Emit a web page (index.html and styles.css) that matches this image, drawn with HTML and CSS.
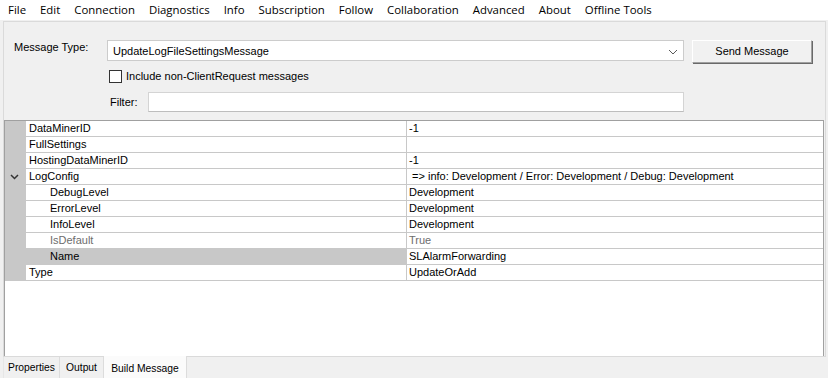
FILE: index.html
```html
<!DOCTYPE html>
<html>
<head>
<meta charset="utf-8">
<link rel="stylesheet" href="styles.css">
</head>
<body>
<div class="menubar">
  <span class="mi">File</span>
  <span class="mi">Edit</span>
  <span class="mi">Connection</span>
  <span class="mi">Diagnostics</span>
  <span class="mi">Info</span>
  <span class="mi">Subscription</span>
  <span class="mi">Follow</span>
  <span class="mi">Collaboration</span>
  <span class="mi">Advanced</span>
  <span class="mi">About</span>
  <span class="mi">Offline Tools</span>
</div>
<div class="main">
  <div class="form">
    <div class="row row-type">
      <span class="lbl-type">Message Type:</span>
      <div class="combo">
        <span class="combo-text">UpdateLogFileSettingsMessage</span>
        <svg class="combo-chev" width="10" height="6" viewBox="0 0 10 6"><path d="M1 1 L5 5 L9 1" fill="none" stroke="#5a5a5a" stroke-width="1"/></svg>
      </div>
      <div class="btn">Send Message</div>
    </div>
    <div class="row row-check">
      <span class="checkbox"></span>
      <span class="check-lbl">Include non-ClientRequest messages</span>
    </div>
    <div class="row row-filter">
      <span class="lbl-filter">Filter:</span>
      <div class="input"></div>
    </div>
  </div>
  <div class="grid">
    <div class="prow"><div class="g"></div><div class="n">DataMinerID</div><div class="v">-1</div></div>
    <div class="prow"><div class="g"></div><div class="n">FullSettings</div><div class="v"></div></div>
    <div class="prow"><div class="g"></div><div class="n">HostingDataMinerID</div><div class="v">-1</div></div>
    <div class="prow"><div class="g"><svg class="exp" width="9" height="6" viewBox="0 0 9 6"><path d="M1 1 L4.5 4.5 L8 1" fill="none" stroke="#333" stroke-width="1.5"/></svg></div><div class="n">LogConfig</div><div class="v">&nbsp;=&gt; info: Development / Error: Development / Debug: Development</div></div>
    <div class="prow"><div class="g"></div><div class="n child">DebugLevel</div><div class="v">Development</div></div>
    <div class="prow"><div class="g"></div><div class="n child">ErrorLevel</div><div class="v">Development</div></div>
    <div class="prow"><div class="g"></div><div class="n child">InfoLevel</div><div class="v">Development</div></div>
    <div class="prow ro"><div class="g"></div><div class="n child">IsDefault</div><div class="v">True</div></div>
    <div class="prow"><div class="g"></div><div class="n child sel">Name</div><div class="v">SLAlarmForwarding</div></div>
    <div class="prow"><div class="g"></div><div class="n">Type</div><div class="v">UpdateOrAdd</div></div>
  </div>
</div>
<div class="tabs">
  <div class="tab tab-props">Properties</div>
  <div class="tab tab-out">Output</div>
  <div class="tab tab-build active">Build Message</div>
</div>
</body>
</html>
```
FILE: styles.css
```css
* { box-sizing: border-box; }
html, body { margin: 0; padding: 0; }
body {
  width: 828px;
  height: 378px;
  overflow: hidden;
  background: #f0f0f0;
  font-family: "Liberation Sans", Arial, sans-serif;
  font-size: 11px;
  color: #000;
}
.menubar {
  height: 20px;
  background: #ffffff;
  display: flex;
  align-items: center;
  padding-left: 1px;
  font-family: "Open Sans", "Noto Sans", sans-serif;
  font-size: 11.4px;
  color: #000;
}
.mi { padding: 0 7px; line-height: 20px; white-space: nowrap; }
.main {
  margin: 1px 0 0 3px;
  width: 823px;
  height: 336px;
  border: 1px solid #dadada;
  display: flex;
  flex-direction: column;
}
.form {
  height: 98px;
  flex: none;
  padding: 18px 0 0 10px;
}
.row { display: flex; }
.row-type { align-items: flex-start; }
.lbl-type { width: 93px; padding-top: 1px; line-height: 13px; }
.combo {
  width: 577px;
  height: 21px;
  background: #fff;
  border: 1px solid #cccccc;
  display: flex;
  align-items: center;
  padding-left: 5px;
  padding-top: 2px;
}
.combo-text { flex: 1; line-height: 13px; }
.combo-chev { margin-right: 5px; }
.btn {
  margin-left: 8px;
  width: 120px;
  height: 23px;
  background: #f1f1f1;
  border-top: 1px solid #ffffff;
  border-left: 1px solid #ffffff;
  border-right: 1px solid #a0a0a0;
  border-bottom: 1px solid #a0a0a0;
  box-shadow: 1px 1px 0 #696969;
  display: flex;
  align-items: center;
  justify-content: center;
  line-height: 13px;
}
.row-check { margin-top: 7px; align-items: center; padding-left: 95px; }
.checkbox {
  width: 13px;
  height: 13px;
  border: 1px solid #333;
  background: #fff;
}
.check-lbl { margin-left: 4px; line-height: 13px; }
.row-filter { margin-top: 9px; align-items: center; padding-left: 96px; }
.lbl-filter { width: 38px; line-height: 13px; padding-top: 1px; }
.input {
  width: 536px;
  height: 20px;
  background: #fff;
  border: 1px solid #d4d4d4;
  border-bottom-color: #bdbdbd;
}
.grid {
  flex: 1;
  margin-right: 1px;
  background: #fff;
  border-top: 1px solid #a0a0a0;
  border-left: 1px solid #a0a0a0;
  border-right: 1px solid #a0a0a0;
}
.prow { display: flex; height: 16px; }
.g {
  width: 21px;
  background: #c8c8c8;
  display: flex;
  align-items: center;
  justify-content: center;
  padding-right: 3px;
}
.exp { display: block; }
.n {
  width: 381px;
  border-bottom: 1px solid #c8c8c8;
  border-right: 1px solid #c8c8c8;
  padding-left: 3px;
  line-height: 15px;
  white-space: nowrap;
}
.n.child { padding-left: 24px; }
.n.sel { background: #c8c8c8; }
.v {
  flex: 1;
  border-bottom: 1px solid #c8c8c8;
  padding-left: 2px;
  line-height: 15px;
  white-space: nowrap;
}
.ro .n, .ro .v { color: #6d6d6d; }
.tabs {
  display: flex;
  margin-left: 3px;
  height: 21px;
  font-size: 10.3px;
}
.tab {
  height: 21px;
  border-right: 1px solid #dcdcdc;
  display: flex;
  justify-content: center;
  padding-top: 4px;
  line-height: 13px;
  white-space: nowrap;
}
.tab-props { width: 57px; border-left: 1px solid #e6e6e6; }
.tab-out { width: 44px; }
.tab-build { width: 83px; }
.tab.active {
  background: #fbfbfb;
  margin-top: -1px;
  height: 22px;
  padding-top: 6px;
}
```
